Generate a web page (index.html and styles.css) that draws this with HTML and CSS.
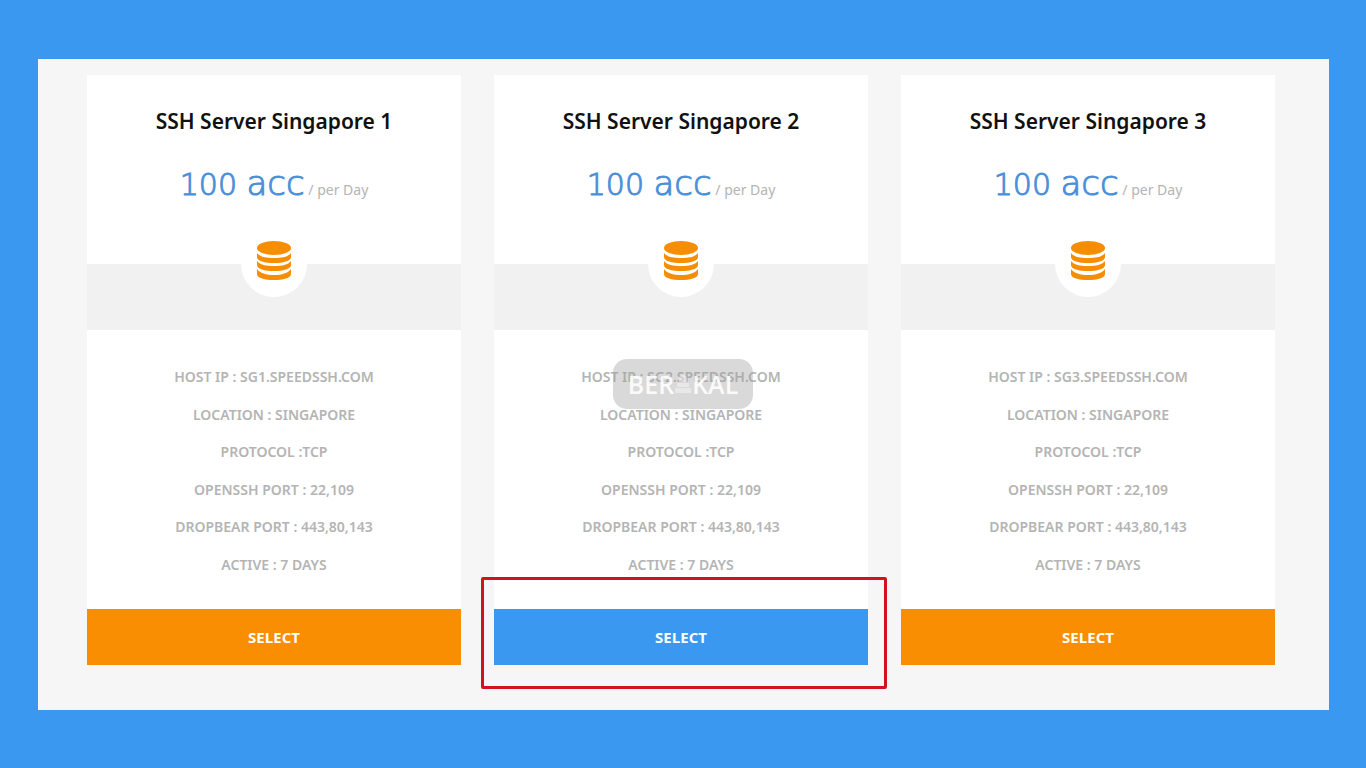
FILE: index.html
```html
<!DOCTYPE html>
<html lang="en">
<head>
    <meta charset="utf-8">
    <title>SSH Server Singapore</title>
    <link rel="stylesheet" href="styles.css">
</head>
<body>
    <svg class="sprite" aria-hidden="true">
        <symbol id="database" viewBox="0 0 34 40">
            <ellipse cx="17" cy="7" rx="17" ry="7"/>
            <path d="M0 12c3 4 9 5 17 5s14-1 17-5v4c0 4-8 6-17 6S0 20 0 16z"/>
            <path d="M0 20c3 4 9 5 17 5s14-1 17-5v4c0 4-8 6-17 6S0 28 0 24z"/>
            <path d="M0 28c3 4 9 6 17 6s14-2 17-6v5c0 4-8 6-17 6S0 37 0 33z"/>
        </symbol>
    </svg>

    <main class="panel">
        <section class="card">
            <h2>SSH Server Singapore 1</h2>
            <p class="price"><span class="num">100</span> <span class="acc">acc</span> <small>/ per Day</small></p>
            <div class="band"><div class="circle"><svg><use href="#database"/></svg></div></div>
            <ul>
                <li>HOST IP : SG1.SPEEDSSH.COM</li>
                <li>LOCATION : SINGAPORE</li>
                <li>PROTOCOL :TCP</li>
                <li>OPENSSH PORT : 22,109</li>
                <li>DROPBEAR PORT : 443,80,143</li>
                <li>ACTIVE : 7 DAYS</li>
            </ul>
            <div class="action"><button type="button">SELECT</button></div>
        </section>

        <section class="card">
            <h2>SSH Server Singapore 2</h2>
            <p class="price"><span class="num">100</span> <span class="acc">acc</span> <small>/ per Day</small></p>
            <div class="band"><div class="circle"><svg><use href="#database"/></svg></div></div>
            <ul>
                <li>HOST IP : SG2.SPEEDSSH.COM</li>
                <li>LOCATION : SINGAPORE</li>
                <li>PROTOCOL :TCP</li>
                <li>OPENSSH PORT : 22,109</li>
                <li>DROPBEAR PORT : 443,80,143</li>
                <li>ACTIVE : 7 DAYS</li>
            </ul>
            <div class="action marked"><button type="button" class="active">SELECT</button></div>
            <div class="watermark">
                BER<svg viewBox="0 0 18 20"><path d="M5 5a4 4 0 0 1 8 0v3H5zM3 9h12v4H3zM1 14h16v5H1z"/></svg>KAL
            </div>
        </section>

        <section class="card">
            <h2>SSH Server Singapore 3</h2>
            <p class="price"><span class="num">100</span> <span class="acc">acc</span> <small>/ per Day</small></p>
            <div class="band"><div class="circle"><svg><use href="#database"/></svg></div></div>
            <ul>
                <li>HOST IP : SG3.SPEEDSSH.COM</li>
                <li>LOCATION : SINGAPORE</li>
                <li>PROTOCOL :TCP</li>
                <li>OPENSSH PORT : 22,109</li>
                <li>DROPBEAR PORT : 443,80,143</li>
                <li>ACTIVE : 7 DAYS</li>
            </ul>
            <div class="action"><button type="button">SELECT</button></div>
        </section>
    </main>
</body>
</html>
```
FILE: styles.css
```css
* {
    box-sizing: border-box;
}

body {
    margin: 0;
    padding: 59px 37px 58px 38px;
    background: #3a98f1;
    font-family: "Open Sans", sans-serif;
}

.sprite {
    display: none;
}

.panel {
    display: grid;
    grid-template-columns: repeat(3, 1fr);
    gap: 33px;
    padding: 16px 54px 45px 49px;
    background: #f6f6f6;
}

.card {
    position: relative;
    background: #fff;
    text-align: center;
}

h2 {
    margin: 0;
    padding-top: 30px;
    color: #111;
    font: 600 21px/32px "Noto Sans", sans-serif;
}

.price {
    margin: 0;
    padding-top: 22px;
    height: 127px;
    color: #4a90d9;
    font: 200 30px/48px "DejaVu Sans Light", "DejaVu Sans", sans-serif;
    -webkit-text-stroke: 1px #4a90d9;
}

.price .acc {
    font-size: 34px;
}

.price small {
    margin-left: -6px;
    color: #b4b4b4;
    font: 400 14px "Noto Sans", sans-serif;
    -webkit-text-stroke: 0;
}

.band {
    display: flex;
    justify-content: center;
    height: 66px;
    background: #f1f1f1;
}

.circle {
    width: 66px;
    height: 66px;
    margin-top: -33px;
    padding-top: 10px;
    border-radius: 50%;
    background: #fff;
}

.circle svg {
    width: 34px;
    height: 40px;
    fill: #f68e05;
}

ul {
    display: grid;
    grid-auto-rows: 1fr;
    align-items: center;
    height: 279px;
    margin: 0;
    padding: 28px 0 26px;
    list-style: none;
    color: #b4b4b4;
    font: 600 14px "Noto Sans", sans-serif;
}

.action {
    position: relative;
}

button {
    display: block;
    width: 100%;
    height: 56px;
    border: 0;
    background: #f98e03;
    color: #fff;
    font: 700 15px "Open Sans", sans-serif;
}

button.active {
    background: #3a98f1;
}

/* red frame around the chosen server */
.marked::after {
    content: "";
    position: absolute;
    top: -32px;
    right: -19px;
    bottom: -24px;
    left: -13px;
    border: 3px solid #d3121f;
    border-radius: 2px;
}

.watermark {
    position: absolute;
    top: 284px;
    left: calc(50% - 68px);
    display: flex;
    align-items: center;
    justify-content: center;
    width: 140px;
    height: 50px;
    border-radius: 14px;
    background: rgba(160, 160, 160, 0.4);
    color: rgba(255, 255, 255, 0.9);
    font-size: 25px;
    font-weight: 600;
}

.watermark svg {
    width: 18px;
    height: 20px;
    fill: rgba(255, 255, 255, 0.4);
}
```
